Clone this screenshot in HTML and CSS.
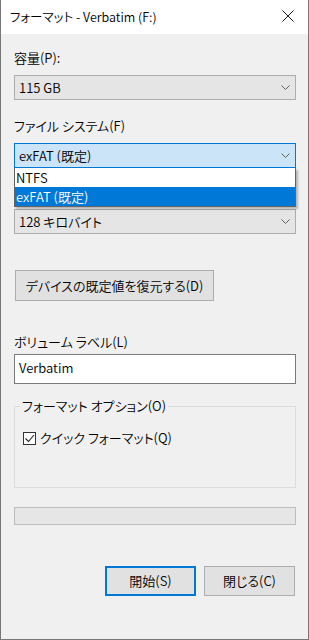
FILE: index.html
```html
<!DOCTYPE html>
<html lang="ja">
<head>
<meta charset="utf-8">
<title>フォーマット - Verbatim (F:)</title>
<link rel="stylesheet" href="styles.css">
</head>
<body>
<div class="window">
  <div class="titlebar">
    <span class="title">フォーマット - Verbatim (F:)</span>
    <svg class="close" width="12" height="12" viewBox="0 0 12 12"><path d="M0.5 0.5 L11.5 11.5 M11.5 0.5 L0.5 11.5" stroke="#1a1a1a" stroke-width="1" fill="none"/></svg>
  </div>
  <div class="content">
    <div class="label first">容量(P):</div>
    <div class="combo">
      <span>115 GB</span>
      <svg class="chev" width="9" height="5" viewBox="0 0 9 5"><path d="M0.5 0.5 L4.5 4.5 L8.5 0.5" stroke="#606060" fill="none"/></svg>
    </div>
    <div class="label">ファイル システム(F)</div>
    <div class="combo-wrap">
      <div class="combo focused">
        <span>exFAT (既定)</span>
        <svg class="chev" width="9" height="5" viewBox="0 0 9 5"><path d="M0.5 0.5 L4.5 4.5 L8.5 0.5" stroke="#606060" fill="none"/></svg>
      </div>
      <ul class="dropdown">
        <li>NTFS</li>
        <li class="sel">exFAT (既定)</li>
      </ul>
    </div>
    <div class="combo unit">
      <span>128 キロバイト</span>
      <svg class="chev" width="9" height="5" viewBox="0 0 9 5"><path d="M0.5 0.5 L4.5 4.5 L8.5 0.5" stroke="#606060" fill="none"/></svg>
    </div>
    <button class="btn restore">デバイスの既定値を復元する(D)</button>
    <div class="label vol">ボリューム ラベル(L)</div>
    <div class="textbox">Verbatim</div>
    <fieldset class="group">
      <legend>フォーマット オプション(O)</legend>
      <label class="check">
        <span class="box"><svg width="11" height="11" viewBox="0 0 11 11"><path d="M1.5 5.5 L4.5 8.5 L10 2" stroke="#222" stroke-width="1.1" fill="none"/></svg></span>
        <span>クイック フォーマット(Q)</span>
      </label>
    </fieldset>
    <div class="progress"></div>
    <div class="actions">
      <button class="btn primary">開始(S)</button>
      <button class="btn">閉じる(C)</button>
    </div>
  </div>
</div>
</body>
</html>
```
FILE: styles.css
```css
html, body {
  margin: 0;
  padding: 0;
}
body {
  width: 309px;
  height: 640px;
  overflow: hidden;
  font-family: "Noto Sans CJK JP", "Noto Sans", sans-serif;
  font-size: 13px;
  font-weight: 350;
  font-feature-settings: "palt" 1;
  color: #000;
}
.window {
  box-sizing: border-box;
  width: 309px;
  height: 640px;
  background: #f0f0f0;
  border: 1px solid #777;
  border-top: none;
}
.titlebar {
  height: 34px;
  background: #fff;
  display: flex;
  align-items: center;
  justify-content: space-between;
  padding: 0 14px 0 9px;
}
.title {
  font-size: 12.5px;
  line-height: 16px;
  margin-top: -1px;
}
.close {
  margin-top: -2px;
}
.content {
  padding: 0 12px 0 13px;
}
.label {
  line-height: 16px;
  height: 16px;
  margin-top: 18px;
  white-space: nowrap;
}
.label.first {
  margin-top: 16px;
}
.combo {
  box-sizing: border-box;
  height: 25px;
  margin-top: 9px;
  background: #e5e5e5;
  border: 1px solid #adadad;
  display: flex;
  align-items: center;
  justify-content: space-between;
  padding: 0 5px 0 4px;
  line-height: 16px;
}
.combo.focused {
  background: #cce4f7;
  border-color: #0078d7;
}
.combo.unit {
  margin-top: 41px;
}
.combo-wrap {
  position: relative;
}
.dropdown {
  position: absolute;
  left: 0;
  right: 0;
  top: 25px;
  margin: 0;
  padding: 0;
  list-style: none;
  background: #fff;
  border: 1px solid #646464;
  border-top: none;
  box-shadow: 2px 2px 2px rgba(0, 0, 0, 0.25);
  z-index: 2;
}
.dropdown li {
  height: 19px;
  line-height: 19px;
  padding-left: 1px;
}
.dropdown li.sel {
  background: #0078d7;
  color: #fff;
}
.btn {
  box-sizing: border-box;
  font: inherit;
  color: #000;
  background: #e1e1e1;
  border: 1px solid #adadad;
  padding: 0;
  line-height: 16px;
  height: 30px;
  width: 91px;
}
.restore {
  display: block;
  width: 199px;
  height: 31px;
  margin: 36px 0 0 1px;
}
.label.vol {
  margin-top: 33px;
}
.textbox {
  box-sizing: border-box;
  height: 30px;
  margin-top: 4px;
  background: #fff;
  border: 1px solid #7a7a7a;
  padding: 0 4px;
  line-height: 26px;
}
.group {
  margin: 14px 0 0 0;
  padding: 0 0 41px 7px;
  border: 1px solid #dcdcdc;
  min-width: 0;
}
.group legend {
  padding: 0 2px;
  margin-left: -2px;
  line-height: 16px;
}
.check {
  display: flex;
  align-items: center;
  gap: 4px;
  margin-top: 16px;
  margin-left: 1px;
  line-height: 16px;
}
.box {
  box-sizing: border-box;
  width: 13px;
  height: 13px;
  border: 1px solid #333;
  background: #fff;
  display: flex;
  align-items: center;
  justify-content: center;
}
.progress {
  box-sizing: border-box;
  height: 18px;
  margin-top: 19px;
  background: #e6e6e6;
  border: 1px solid #bcbcbc;
}
.actions {
  display: flex;
  justify-content: flex-end;
  gap: 8px;
  margin-top: 41px;
  padding-right: 1px;
}
.btn.primary {
  border: 2px solid #0078d7;
}
```
